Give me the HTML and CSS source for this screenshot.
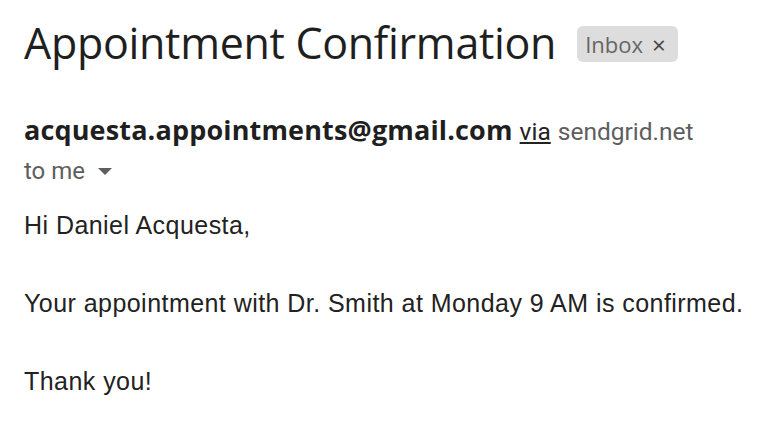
FILE: index.html
```html
<!DOCTYPE html>
<html>
<head>
<meta charset="utf-8">
<link rel="stylesheet" href="styles.css">
</head>
<body>
<div class="mail">
  <div class="subject-row">
    <h1 class="subject">Appointment Confirmation</h1>
    <span class="chip">Inbox <span class="chip-x">×</span></span>
  </div>
  <div class="sender-row">
    <span class="sender">acquesta.appointments@gmail.com</span>
    <span class="via">via</span>
    <span class="domain">sendgrid.net</span>
  </div>
  <div class="to-row">
    <span class="to">to me</span>
    <svg class="caret" width="14" height="8" viewBox="0 0 14 8"><path d="M0 0h14L7 7z" fill="#5e5e5e"/></svg>
  </div>
  <div class="body">
    <p>Hi Daniel Acquesta,</p>
    <p>Your appointment with Dr. Smith at Monday 9 AM is confirmed.</p>
    <p>Thank you!</p>
  </div>
</div>
</body>
</html>
```
FILE: styles.css
```css
html, body {
  margin: 0;
  padding: 0;
  background: #fff;
}
.mail {
  padding: 0 0 0 24px;
}
.subject-row {
  display: flex;
  align-items: flex-start;
  gap: 21px;
  padding-top: 15px;
  height: 56px;
}
.subject {
  margin: 0;
  font-family: "Open Sans", sans-serif;
  font-weight: 400;
  font-size: 43px;
  color: #1f1f1f;
  line-height: 56px;
  letter-spacing: -0.3px;
}
.chip {
  margin-top: 11px;
  display: inline-flex;
  align-items: center;
  height: 36px;
  padding: 0 12px 0 8px;
  background: #dddddd;
  border-radius: 6px;
  font-family: "Open Sans", sans-serif;
  font-size: 22px;
  color: #666;
  gap: 9px;
}
.chip-x {
  font-size: 24px;
  color: #444;
}
.sender-row {
  margin-top: 44px;
  display: flex;
  align-items: baseline;
  gap: 7px;
  height: 30px;
  line-height: 30px;
}
.sender {
  font-family: "Open Sans", sans-serif;
  font-weight: 700;
  font-size: 27px;
  letter-spacing: 0.15px;
  color: #1f1f1f;
}
.via {
  font-family: Roboto, sans-serif;
  font-size: 24.5px;
  color: #222;
  text-decoration: underline;
}
.domain {
  font-family: Roboto, sans-serif;
  font-size: 24.5px;
  color: #5e5e5e;
}
.to-row {
  margin-top: 11px;
  display: flex;
  align-items: center;
  gap: 13px;
  height: 30px;
  font-family: Roboto, sans-serif;
  font-size: 24px;
  line-height: 30px;
  color: #5e5e5e;
}
.caret {
  margin-top: 2px;
}
.body {
  margin-top: 20px;
  font-family: "Liberation Sans", Arial, sans-serif;
  font-size: 25px;
  letter-spacing: 0.45px;
  color: #222;
  line-height: 39px;
}
.body p {
  margin: 0 0 39px 0;
}
```
